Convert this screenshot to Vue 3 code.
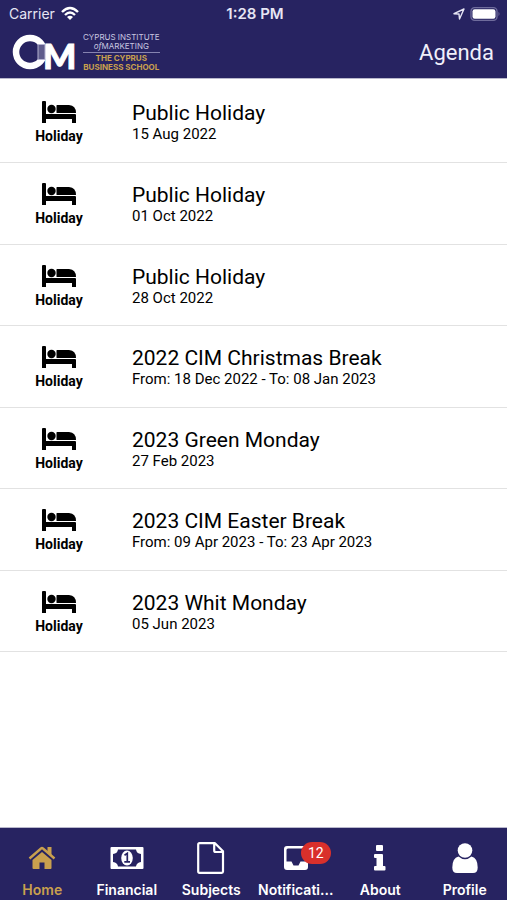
<template>
  <div class="app">
    <header class="header">
      <div class="status">
        <div class="status__left">
          <span>Carrier</span>
          <svg class="status__wifi" viewBox="0 0 20 15" width="20" height="15" aria-hidden="true">
            <path d="M2 6 Q10 -2 18 6" fill="none" stroke="#fff" stroke-width="2.4" />
            <path d="M5 9 Q10 4 15 9" fill="none" stroke="#fff" stroke-width="2.3" />
            <path d="M7 11 Q10 8.500 13 11 L10 14 Z" fill="#fff" />
          </svg>
        </div>
        <span class="status__time">1:28 PM</span>
        <div class="status__right">
          <svg viewBox="0 0 12 12" width="12" height="12" aria-hidden="true">
            <path d="M1 5.700 L11 1 L6.500 11 L6 6 Z" fill="none" stroke="#e6e5f4" stroke-width="1.4" stroke-linejoin="round" />
          </svg>
          <svg viewBox="0 0 31 14" width="31" height="14" aria-hidden="true">
            <rect x="1" y="0.7" width="26" height="12.600" rx="3.600" fill="none" stroke="#6f6c9c" stroke-width="1.3" />
            <rect x="2.500" y="2.200" width="23" height="9.600" rx="2.200" fill="#fff" />
            <path d="M28.500 4.800 Q30.500 7 28.500 9.200 Z" fill="#6f6c9c" />
          </svg>
        </div>
      </div>

      <div class="topbar">
        <a class="brand" href="#">
          <svg class="brand__mark" viewBox="0 0 66 48" width="66" height="48" aria-hidden="true">
            <circle cx="18" cy="23" r="14" fill="none" stroke="#fff" stroke-width="6.500" />
            <text x="31" y="40" class="brand__letter">M</text>
            <rect x="26" y="15.500" width="7" height="15" fill="#5f5c8c" stroke="#b4b2d0" />
          </svg>
          <span class="brand__text">
            <span class="brand__line">CYPRUS INSTITUTE</span>
            <span class="brand__line"><i>of</i>MARKETING</span>
            <span class="brand__rule" />
            <span class="brand__line brand__line--gold">THE CYPRUS</span>
            <span class="brand__line brand__line--gold">BUSINESS SCHOOL</span>
          </span>
        </a>
        <h1 class="topbar__title">Agenda</h1>
      </div>
    </header>

    <main class="content">
      <ul class="agenda">
        <li v-for="event in events" :key="event.date" class="agenda__item">
          <div class="agenda__type">
            <svg viewBox="0 0 34 22" width="34" height="22" aria-hidden="true">
              <path d="M1 0h2q1 0 1 1v12h29q1 0 1 1v8h-4v-4H4v4H0V1q0-1 1-1z" />
              <circle cx="9.500" cy="8" r="4.200" />
              <path d="M15 4h12q7 0.500 7 8H15q-0.500 0-0.500-0.600V4.600Q14.500 4 15 4z" />
            </svg>
            <span>Holiday</span>
          </div>
          <div class="agenda__body">
            <h2 class="agenda__title">{{ event.title }}</h2>
            <p class="agenda__date">{{ event.date }}</p>
          </div>
        </li>
      </ul>
    </main>

    <nav class="tabs">
      <a
          v-for="tab in tabs"
          :key="tab.id"
          href="#"
          class="tabs__item"
          :class="{ 'tabs__item--active': current === tab.id }"
          @click.prevent="current = tab.id"
      >
        <span class="tabs__icon">
          <svg v-if="tab.id === 'home'" viewBox="0 0 28 24" width="28" height="24" aria-hidden="true">
            <path d="M14 6 L23.500 14 V22 q0 1-1 1 H16.500 V16.500 H11.500 V23 H5.500 q-1 0-1-1 V14 Z" fill="currentColor" />
            <path d="M1.500 12.500 L13 2.500 q1-0.800 2 0 L26.500 12.500" fill="none" stroke="currentColor" stroke-width="2.400" />
            <path d="M19.500 1 h4 v9 l-4-3.500 Z" fill="currentColor" />
          </svg>
          <svg v-else-if="tab.id === 'financial'" viewBox="0 0 34 24" width="34" height="24" aria-hidden="true">
            <path fill-rule="evenodd" d="M1.500 1h31q1 0 1 1v20q0 1-1 1h-31q-1 0-1-1V2q0-1 1-1zM8 3.500q-0.500 4-5 4.500v8q4.500 0.500 5 4.500h18q0.500-4 5-4.500V8q-4.500-0.500-5-4.500z" fill="currentColor" />
            <ellipse cx="17" cy="12" rx="5.800" ry="7.500" fill="currentColor" />
            <path d="M14.500 9.200 L17.300 7.300 V15.500 M14.300 15.900 H20" fill="none" stroke="#272361" stroke-width="1.700" />
          </svg>
          <svg v-else-if="tab.id === 'subjects'" viewBox="0 0 28 32" width="28" height="32" aria-hidden="true">
            <path d="M2.500 1.200 H18 L26 9.200 V29.500 q0 1.300-1.300 1.300 H2.500 q-1.300 0-1.300-1.300 V2.500 q0-1.300 1.300-1.300 Z M17.200 1.500 V8.500 q0 1.500 1.500 1.500 H26" fill="none" stroke="currentColor" stroke-width="2.200" stroke-linejoin="round" />
          </svg>
          <svg v-else-if="tab.id === 'notifications'" viewBox="0 0 24 24" width="24" height="24" aria-hidden="true">
            <path fill-rule="evenodd" d="M3 0h18q3 0 3 3v18q0 3-3 3H3q-3 0-3-3V3q0-3 3-3zM4 2.500Q2.500 2.500 2.500 4v11.500h5l2 4h5l2-4h5V4q0-1.500-1.500-1.500z" fill="currentColor" />
          </svg>
          <svg v-else-if="tab.id === 'about'" viewBox="0 0 12 26" width="12" height="26" aria-hidden="true">
            <path d="M3 0h5q1 0 1 1v4q0 1-1 1H3q-1 0-1-1V1q0-1 1-1zM1 9h7q1 0 1 1v11h1.500q1 0 1 1v2.500q0 1-1 1H1q-1 0-1-1V22q0-1 1-1h1.500v-8H1q-1 0-1-1v-2q0-1 1-1z" fill="currentColor" />
          </svg>
          <svg v-else viewBox="0 0 26 30" width="26" height="30" aria-hidden="true">
            <circle cx="13" cy="7.500" r="7.300" fill="currentColor" />
            <path d="M6.500 13.500 Q13 19 19.500 13.500 Q25.700 15 25.700 24.500 Q25.700 30 21 30 H5 Q0.300 30 0.300 24.500 Q0.300 15 6.500 13.500 Z" fill="currentColor" />
          </svg>
          <span v-if="tab.badge" class="tabs__badge">{{ tab.badge }}</span>
        </span>
        <span class="tabs__label">{{ tab.label }}</span>
      </a>
    </nav>
  </div>
</template>

<script setup>
import { ref } from 'vue'

const events = [
  { title: 'Public Holiday', date: '15 Aug 2022' },
  { title: 'Public Holiday', date: '01 Oct 2022' },
  { title: 'Public Holiday', date: '28 Oct 2022' },
  { title: '2022 CIM Christmas Break', date: 'From: 18 Dec 2022 - To: 08 Jan 2023' },
  { title: '2023 Green Monday', date: '27 Feb 2023' },
  { title: '2023 CIM Easter Break', date: 'From: 09 Apr 2023 - To: 23 Apr 2023' },
  { title: '2023 Whit Monday', date: '05 Jun 2023' },
]

const tabs = [
  { id: 'home', label: 'Home' },
  { id: 'financial', label: 'Financial' },
  { id: 'subjects', label: 'Subjects' },
  { id: 'notifications', label: 'Notificati...', badge: 12 },
  { id: 'about', label: 'About' },
  { id: 'profile', label: 'Profile' },
]

const current = ref('home')
</script>

<style>
body {
  margin: 0;
  background: #fff;
}
</style>

<style scoped>
.app {
  display: flex;
  flex-direction: column;
  min-height: 100vh;
  font-family: Roboto, sans-serif;
  color: #000;
}

.header {
  background: #272361;
  color: #fff;
  border-bottom: 1px solid #b9b8cc;
}

/* Status bar */
.status {
  display: grid;
  grid-template-columns: 1fr auto 1fr;
  align-items: center;
  height: 27px;
  padding: 0 6px 0 9px;
  font-family: Inter, sans-serif;
  font-size: 14px;
  color: #e6e5f4;
}

.status__left,
.status__right {
  display: flex;
  align-items: center;
  gap: 5px;
}
.status__right { justify-content: flex-end; }
.status__time {
  font-size: 15px;
  font-weight: 600;
}

/* Logo and page title */
.topbar {
  display: flex;
  align-items: center;
  justify-content: space-between;
  height: 51px;
  padding: 0 13px 0 12px;
}

.brand {
  display: flex;
  align-items: center;
  gap: 5px;
  color: #c9c7e0;
  text-decoration: none;
}

.brand__letter {
  font-family: Lato, sans-serif;
  font-size: 35px;
  font-weight: 900;
  fill: #fff;
  stroke: #fff;
}

.brand__text {
  display: flex;
  flex-direction: column;
  align-items: center;
  font-family: Inter, sans-serif;
  font-size: 8px;
  line-height: 9px;
}
.brand__line--gold {
  color: #c9a04e;
  font-weight: 700;
}
.brand__rule {
  align-self: stretch;
  height: 1px;
  margin: 1px 0;
  background: #8683b0;
}

.topbar__title {
  margin: 0;
  font-size: 22px;
  line-height: 26px;
  font-weight: 400;
  color: #f0effa;
}

/* Agenda list */
.content { flex: 1; }

.agenda {
  margin: 0;
  padding: 2px 0 0;
  list-style: none;
}

.agenda__item {
  display: flex;
  align-items: center;
  box-sizing: border-box;
  min-height: 82px;
  border-bottom: 1px solid #e2e2e2;
}
.agenda__item:nth-child(odd):not(:first-child) { min-height: 81px; }

.agenda__type {
  display: flex;
  flex-direction: column;
  align-items: center;
  gap: 4px;
  width: 118px;
  padding-top: 3px;
  font-size: 14px;
  line-height: 18px;
  font-weight: 700;
}

.agenda__body {
  margin-left: 14px;
  padding-top: 1px;
}

.agenda__title {
  margin: 0;
  font-size: 21px;
  line-height: 24px;
  font-weight: 400;
}

.agenda__date {
  margin: 0;
  font-size: 15px;
  line-height: 18px;
}

/* Bottom tabs */
.tabs {
  position: sticky;
  bottom: 0;
  display: grid;
  grid-template-columns: repeat(6, 1fr);
  background: #272361;
  border-top: 1px solid #b9b8cc;
}

.tabs__item {
  display: flex;
  flex-direction: column;
  align-items: center;
  gap: 6px;
  padding: 12px 0 2px;
  color: #fff;
  text-decoration: none;
}
.tabs__item--active { color: #c9a04e; }

.tabs__icon {
  position: relative;
  display: flex;
  align-items: center;
  justify-content: center;
  height: 36px;
}

.tabs__badge {
  position: absolute;
  top: 2px;
  left: 17px;
  width: 30px;
  border-radius: 11px;
  background: #d9302b;
  color: #fff;
  font-size: 14px;
  line-height: 22px;
  text-align: center;
}

.tabs__label {
  font-family: Inter, sans-serif;
  font-size: 14px;
  line-height: 16px;
  font-weight: 600;
}
</style>
